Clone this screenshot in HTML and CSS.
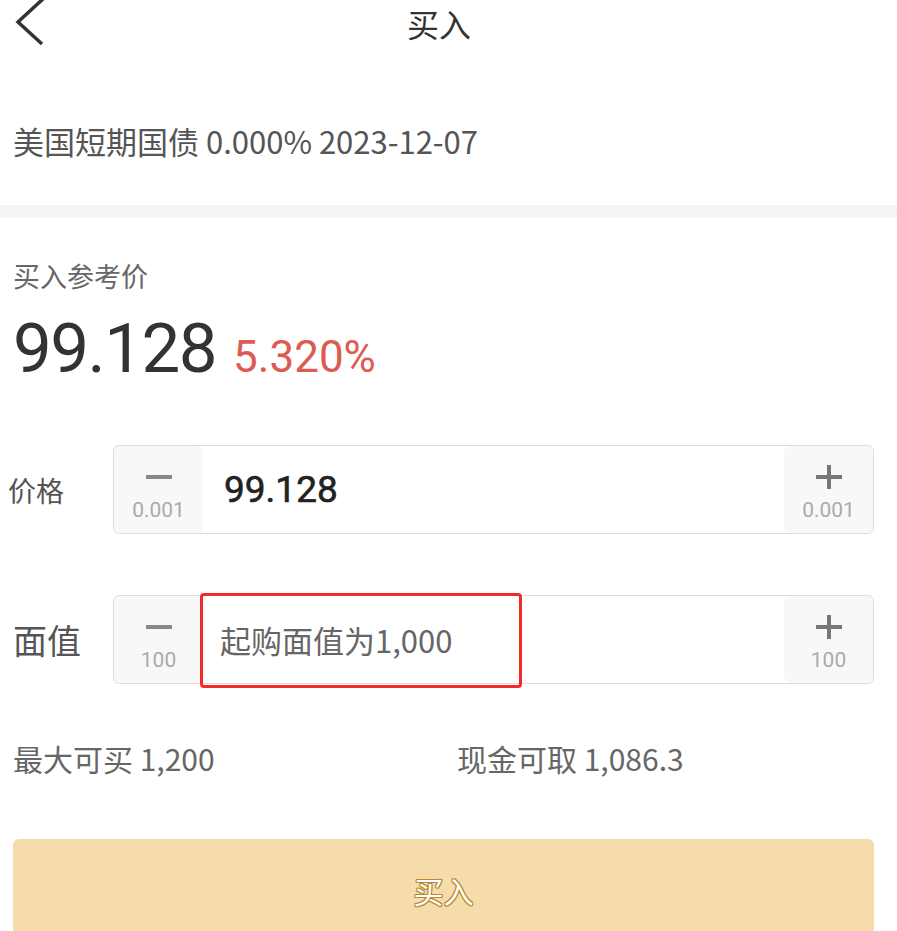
FILE: index.html
```html
<!DOCTYPE html>
<html lang="zh-CN">
<head>
  <meta charset="UTF-8" />
  <meta name="viewport" content="width=device-width, initial-scale=1.0" />
  <title>买入</title>
  <link rel="stylesheet" href="styles.css">
</head>
<body>
  <div class="nav">
    <svg class="back" width="40" height="46" viewBox="0 0 40 46">
      <path d="M31 -2 L5 22 L29 44" fill="none" stroke="#333" stroke-width="3.5" />
    </svg>
    <div class="title">买入</div>
    <div></div>
  </div>

  <div class="bond">美国短期国债 0.000% 2023-12-07</div>
  <div class="divider"></div>

  <div class="main">
    <div class="quote-label">买入参考价</div>
    <div class="quote">
      <span class="quote-price">99.128</span>
      <span class="quote-rate">5.320%</span>
    </div>

    <div class="field">
      <div class="field-label price-label">价格</div>
      <div class="stepper">
        <div class="step">
          <svg width="26" height="24" viewBox="0 0 26 24"><rect x="0" y="10" width="26" height="4" fill="#888" /></svg>
          <span class="step-num">0.001</span>
        </div>
        <div class="step-input value">99.128</div>
        <div class="step">
          <svg width="26" height="24" viewBox="0 0 26 24"><rect x="0" y="10" width="26" height="4" fill="#777" /><rect x="11" y="0" width="4" height="24" fill="#777" /></svg>
          <span class="step-num">0.001</span>
        </div>
      </div>
    </div>

    <div class="field field-face">
      <div class="field-label face-label">面值</div>
      <div class="stepper">
        <div class="step">
          <svg width="26" height="24" viewBox="0 0 26 24"><rect x="0" y="10" width="26" height="4" fill="#888" /></svg>
          <span class="step-num">100</span>
        </div>
        <div class="step-input placeholder">起购面值为1,000</div>
        <div class="step">
          <svg width="26" height="24" viewBox="0 0 26 24"><rect x="0" y="10" width="26" height="4" fill="#777" /><rect x="11" y="0" width="4" height="24" fill="#777" /></svg>
          <span class="step-num">100</span>
        </div>
        <div class="mark"></div>
      </div>
    </div>

    <div class="info">
      <div>最大可买 1,200</div>
      <div>现金可取 1,086.3</div>
    </div>

    <button class="buy">买入</button>
  </div>
</body>
</html>
```

FILE: styles.css
```css
body {
  margin: 0;
  font-family: "Noto Sans CJK SC", "Noto Sans", sans-serif;
  background-color: #fff;
  color: #333;
  overflow: hidden;
}
.nav {
  display: grid;
  grid-template-columns: 1fr auto 1fr;
  align-items: center;
  height: 46px;
  padding: 0 32px 0 13px;
}
.back {
  display: block;
}
.title {
  font-size: 32px;
  line-height: 42px;
  color: #333;
}
.bond {
  margin-top: 75px;
  padding: 0 0 44px 13px;
  font-size: 31px;
  line-height: 40px;
  color: #555;
}
.divider {
  height: 13px;
  background-color: #f5f5f5;
}
.main {
  padding: 0 23px 0 13px;
}
.quote-label {
  margin-top: 40px;
  font-size: 27px;
  line-height: 36px;
  color: #666;
}
.quote {
  display: flex;
  align-items: baseline;
  margin-top: 20px;
  font-family: Roboto, "Noto Sans", sans-serif;
  line-height: 1;
}
.quote-price {
  font-size: 69px;
  letter-spacing: -1.5px;
  color: #333;
}
.quote-rate {
  margin-left: 17px;
  font-size: 44px;
  color: #dc5c52;
}
.field {
  display: flex;
  align-items: center;
  margin-top: 62px;
}
.field-face {
  margin-top: 61px;
}
.field-label {
  width: 100px;
  color: #555;
}
.price-label {
  margin-left: -5px;
  width: 105px;
  font-size: 28px;
}
.face-label {
  font-size: 34px;
}
.stepper {
  position: relative;
  flex: 1;
  display: flex;
  height: 89px;
  box-sizing: border-box;
  border: 1px solid #ddd;
  border-radius: 6px;
}
.step {
  width: 89px;
  display: flex;
  flex-direction: column;
  align-items: center;
  padding-top: 19px;
  background-color: #f8f8f8;
  border-radius: 6px;
}
.step svg {
  display: block;
}
.step-num {
  margin-top: 9px;
  font-family: Roboto, "Noto Sans", sans-serif;
  font-size: 21px;
  line-height: 24px;
  color: #aaa;
}
.step-input {
  flex: 1;
  display: flex;
  align-items: center;
}
.value {
  padding-left: 21px;
  font-family: Roboto, "Noto Sans", sans-serif;
  font-size: 37px;
  color: #222;
  -webkit-text-stroke: 0.6px #222;
}
.placeholder {
  padding-left: 17px;
  font-size: 31px;
  color: #666;
}
.mark {
  position: absolute;
  left: 86px;
  top: -3px;
  width: 322px;
  height: 95px;
  box-sizing: border-box;
  border: 3px solid #f42a2a;
  border-radius: 4px;
}
.info {
  display: grid;
  grid-template-columns: 444px 1fr;
  margin-top: 54px;
  font-size: 30px;
  line-height: 40px;
  color: #666;
}
.buy {
  display: block;
  width: 100%;
  height: 110px;
  margin-top: 61px;
  border: none;
  border-radius: 6px;
  background-color: #f5dcaa;
  font-family: "Noto Sans CJK SC", sans-serif;
  font-size: 30px;
  color: #fff;
  text-shadow: 1px 0 #b8892f, -1px 0 #b8892f, 0 1px #b8892f, 0 -1px #b8892f, 1px 1px #b8892f, -1px -1px #b8892f, 1px -1px #b8892f, -1px 1px #b8892f;
  padding: 0 0 8px;
}
```
